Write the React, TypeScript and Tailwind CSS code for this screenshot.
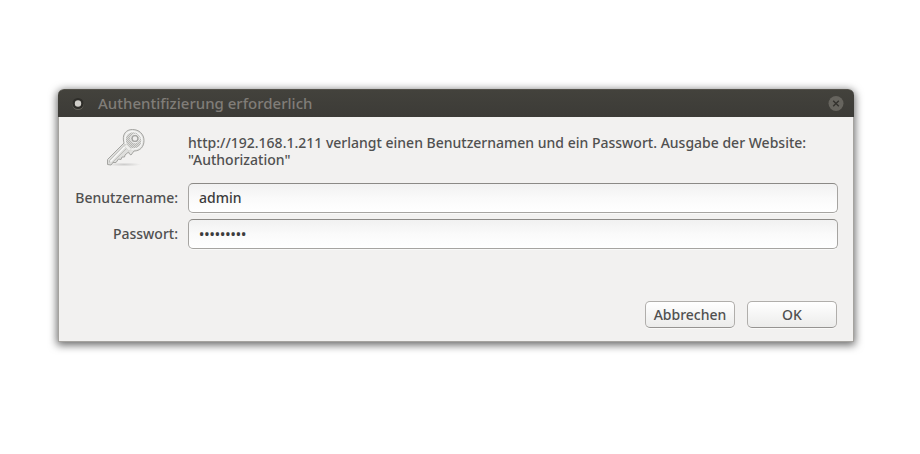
import { useState } from 'react';

const inputClass =
  'h-[30px] w-full rounded-[5px] border border-[#a6a4a1] border-t-[#8b8986] bg-linear-to-b from-[#f1f1f1] via-[#fafafa] to-white px-2.5 pb-0.5 text-[#3c3c3c] shadow-[0_1px_0_#f9f9f8] outline-none';

const buttonClass =
  'h-[27px] w-[90px] rounded-[5px] border border-[#b0aeab] border-b-[#969492] bg-linear-to-b from-white to-[#ececeb] text-center leading-6 shadow-[0_1px_0_#f9f9f8]';

function WindowIcon() {
  return (
    <svg width="14" height="14" viewBox="0 0 14 14" aria-hidden="true">
      <circle cx="7" cy="7.5" r="5.6" fill="#66645c" />
      <circle cx="7" cy="6.5" r="5.6" fill="#2e2d29" />
      <circle cx="7" cy="6.5" r="3.2" fill="#d0cec9" />
    </svg>
  );
}

function CloseIcon() {
  return (
    <svg width="16" height="16" viewBox="0 0 16 16" aria-hidden="true">
      <circle cx="8" cy="7.5" r="7.5" fill="#66645e" />
      <path d="M5.2 4.7l5.6 5.6M10.8 4.7l-5.6 5.6" stroke="#33322e" strokeWidth="1.4" />
    </svg>
  );
}

function KeyIcon() {
  return (
    <svg width="44" height="44" viewBox="0 0 44 44" aria-hidden="true">
      <defs>
        <linearGradient id="metal" x1="0" y1="0" x2="1" y2="1">
          <stop offset="0" stopColor="#fafaf9" />
          <stop offset="0.5" stopColor="#dcdcda" />
          <stop offset="1" stopColor="#efefed" />
        </linearGradient>
        <radialGradient id="ground">
          <stop offset="0" stopColor="#888" stopOpacity="0.35" />
          <stop offset="1" stopColor="#888" stopOpacity="0" />
        </radialGradient>
        <pattern id="grain" width="2" height="2" patternUnits="userSpaceOnUse">
          <rect width="2" height="2" fill="#dadad8" />
          <rect width="1" height="1" fill="#b6b6b3" />
          <rect x="1" y="1" width="1" height="1" fill="#b6b6b3" />
        </pattern>
      </defs>
      <ellipse cx="20" cy="39.500" rx="17" ry="2" fill="url(#ground)" />
      <path
        d="M20 18C17.500 9.500 22 4.500 28.500 4.500C35 4.500 40 9 40 15.500C40 22 36 26 30 26L28.500 28L27 30L25.500 29L24.500 27L21 30L20.500 32L18 32L17 34.500L14.500 34L12 37.500L9 37.500L7 40L3.500 39.500L3.500 34.500Z"
        fill="url(#metal)"
        stroke="#a4a4a1"
        strokeLinejoin="round"
      />
      <path
        d="M21.500 17.500C20 11 23.500 6.500 28.500 6.500C34 6.500 38 10.500 38 15.500C38 20.500 35 24 29.500 24L26 24L22.500 20Z"
        fill="url(#grain)"
        stroke="#f6f6f5"
        strokeWidth="1.4"
      />
      <path d="M21.500 19L5.500 35.500V37.500M24 22L8 38" fill="none" stroke="#bebebb" />
      <path d="M22 20.500L6.500 36.500" stroke="#f8f8f7" strokeWidth="1.5" />
      <path d="M22.500 19L27.500 24L25 26L20.500 21.500Z" fill="#eeeeec" stroke="#cacac7" strokeWidth="0.5" />
      <circle cx="31" cy="13.500" r="4.300" fill="none" stroke="#f5f5f4" />
      <circle cx="31" cy="13.500" r="2.900" fill="#efeeed" stroke="#a4a4a1" strokeWidth="1.3" />
    </svg>
  );
}

export default function App() {
  const [username, setUsername] = useState('admin');
  const [password, setPassword] = useState('password1');

  return (
    <div className="min-h-screen bg-white pt-[89px] pr-[66px] pb-8 pl-[58px] font-['Noto_Sans',sans-serif] text-[14px] font-medium text-[#505050]">
      <section
        role="dialog"
        aria-labelledby="dialog-title"
        className="rounded-t-[6px] shadow-[0_2px_8px_1px_rgba(0,0,0,0.6)]"
      >
        {/* Title bar */}
        <header className="flex h-7 items-center rounded-t-[6px] border-t border-[#53514a] bg-linear-to-b from-[#43423c] to-[#3c3b37] pr-2.5 pl-[13px]">
          <WindowIcon />
          <h1 id="dialog-title" className="ml-[13px] pb-0.5 text-[15px] leading-6 text-[#807d78]">
            Authentifizierung erforderlich
          </h1>
          <button type="button" aria-label="Schließen" className="ml-auto">
            <CloseIcon />
          </button>
        </header>

        <form
          className="border-x border-b border-[#a5a39f] bg-[#f2f1f0] px-[15px] pt-2 pb-[13px]"
          onSubmit={(e) => e.preventDefault()}
        >
          <div className="grid grid-cols-[104px_1fr] items-center gap-x-2.5 gap-y-1.5">
            <div className="flex h-[52px] items-start justify-center">
              <KeyIcon />
            </div>
            <p className="leading-[17px]">
              http://192.168.1.211 verlangt einen Benutzernamen und ein Passwort. Ausgabe der Website:
              <br />
              "Authorization"
            </p>

            <label htmlFor="username" className="text-right leading-7">
              Benutzername:
            </label>
            <input
              id="username"
              type="text"
              className={inputClass}
              value={username}
              onChange={(e) => setUsername(e.target.value)}
            />

            <label htmlFor="password" className="text-right leading-7">
              Passwort:
            </label>
            <input
              id="password"
              type="password"
              className={inputClass}
              value={password}
              onChange={(e) => setPassword(e.target.value)}
            />
          </div>

          {/* Actions */}
          <div className="mt-[52px] flex justify-end gap-3 pr-px">
            <button type="button" className={buttonClass}>
              Abbrechen
            </button>
            <button type="submit" className={buttonClass}>
              OK
            </button>
          </div>
        </form>
      </section>
    </div>
  );
}
